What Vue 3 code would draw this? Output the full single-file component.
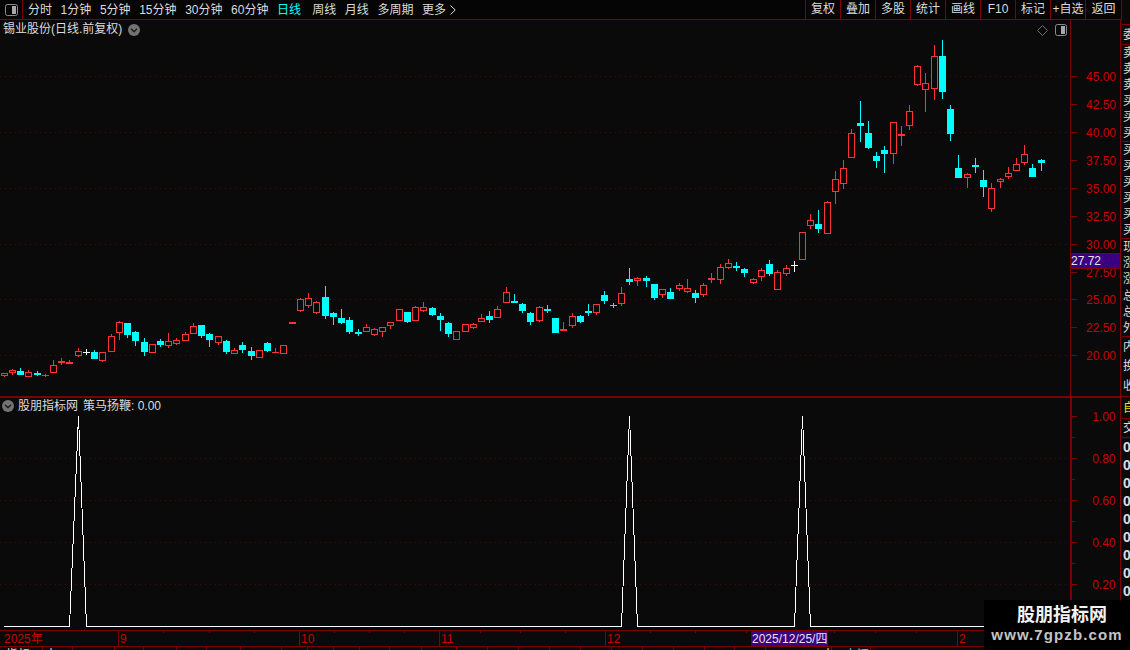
<script setup>
const Z7 = [
  [13,310,310,317,320,'r'],[37,297,301,308,315,'r'],[61,294,304,315,315,'c'],[85,300,307,320,320,'r'],
  [112,303,309,315,318,'c'],[136,312,315,317,320,'r'],[160,270,286,308,308,'r'],[184,264,273,279,285,'r'],
  [208,270,276,282,282,'r'],[235,234,244,257,260,'r'],[258,237,245,248,255,'w'],[283,240,246,267,267,'c'],
  [307,246,247,272,275,'r'],[334,192,199,245,245,'r'],[358,153,157,188,210,'r'],[382,159,159,195,204,'c'],
  [406,183,186,213,228,'c'],[433,204,216,246,258,'c'],[457,222,223,250,250,'r'],[481,207,213,225,231,'c'],
  [505,189,214,228,234,'r'],[529,204,211,221,225,'r'],[556,186,193,212,212,'r'],[580,159,169,191,191,'r'],
  [604,165,165,198,204,'c'],[628,189,192,210,231,'c'],[655,198,199,218,225,'r'],[679,210,213,246,252,'c'],
  [703,234,241,251,251,'r'],[727,216,225,240,249,'c'],[754,231,243,258,270,'c'],[778,240,241,263,263,'r'],
  [802,216,219,243,246,'c'],[826,234,246,249,249,'r'],[850,225,226,251,251,'r']
]
const Z8 = [
  [8,216,216,221,221,'r'],[31,144,148,182,186,'r'],[55,129,145,167,173,'r'],[79,153,157,188,191,'r'],
  [106,108,141,198,207,'c'],[130,186,189,201,225,'c'],[154,177,204,219,222,'c'],[178,201,210,246,252,'c'],
  [205,237,246,252,258,'c'],[229,222,232,247,247,'r'],[253,234,238,254,258,'r'],[277,232,232,245,261,'r'],
  [301,216,217,227,237,'r'],[328,177,178,212,212,'r'],[352,186,186,216,219,'c'],[376,168,172,212,212,'r'],
  [400,156,172,182,186,'r'],[427,171,174,195,198,'c'],[451,189,198,210,243,'c'],[475,216,219,252,261,'c'],
  [499,244,244,269,269,'r'],[526,222,223,245,245,'r'],[550,220,223,233,237,'r'],[574,192,205,215,215,'r'],
  [598,183,198,210,219,'c'],[622,168,178,203,203,'r'],[649,111,127,158,158,'r'],[673,132,153,159,159,'c'],
  [697,159,162,183,189,'c'],[721,186,189,216,225,'c'],[748,168,172,212,216,'r'],[772,165,177,183,189,'c'],
  [796,204,204,249,249,'c'],[820,216,237,243,243,'r'],[847,189,199,227,234,'r'],[871,195,198,216,219,'c']
]
const Z9 = [
  [7,249,258,288,294,'r'],[31,255,258,276,279,'c'],[55,222,243,249,258,'c'],[79,222,222,248,255,'r'],
  [103,183,195,213,222,'c'],[130,219,225,228,234,'c'],[154,171,190,221,228,'r'],[178,114,147,156,165,'c'],
  [202,141,144,152,168,'r'],[229,138,144,153,171,'c'],[253,162,162,204,210,'c'],[277,177,178,194,204,'r'],
  [301,174,186,207,207,'c'],[328,159,166,177,183,'r'],[352,147,175,186,189,'r'],[376,180,189,204,219,'c'],
  [400,159,166,194,201,'r'],[424,129,144,149,159,'r'],[451,102,112,149,162,'r'],[475,87,100,114,117,'r'],
  [499,96,108,114,123,'c'],[523,114,117,129,141,'c'],[550,144,148,159,162,'r'],[574,114,121,140,153,'r'],
  [598,90,102,132,138,'c'],[622,120,127,179,179,'r'],[649,105,115,131,138,'r'],[673,93,105,108,126,'w']
]
const Z10 = [
  [37,607,607,689,689,'r'],[61,552,571,589,596,'r'],[85,540,582,597,609,'c'],[112,514,517,611,611,'r'],
  [136,423,448,487,522,'r'],[160,390,415,461,477,'r'],[184,297,310,383,383,'r'],[211,213,279,288,336,'c'],
  [235,273,309,354,357,'c'],[259,366,378,393,414,'c'],[283,348,360,372,429,'c'],[310,277,277,371,402,'r'],
  [334,288,312,317,348,'r'],[358,225,244,287,300,'r'],[382,105,109,164,168,'r'],[406,129,160,179,246,'r'],
  [433,45,79,176,210,'r'],[457,30,78,186,207,'c'],[481,225,237,312,333,'c'],[505,375,414,444,444,'c'],
  [532,429,433,445,474,'r'],[556,384,405,411,429,'c'],[580,420,450,471,501,'c'],[604,459,475,536,546,'r'],
  [631,444,448,455,474,'r'],[655,411,430,442,447,'r'],[679,384,403,422,422,'r'],[703,345,373,398,405,'r'],
  [727,402,414,441,441,'c'],[754,387,390,399,423,'c']
]
const BG = '#0a0a0a'
const COL = { r: '#ff3333', c: '#00ffff', w: '#ffffff' }
const rects = []
function add(list, ox, oy) {
  for (const [zx, wt, bt, bb, wb, t] of list) {
    const x = Math.floor(zx / 3 + ox)
    const top = Math.round(bt / 3 + oy)
    const bot = Math.max(Math.round(bb / 3 + oy), top + 1)
    const wTop = Math.round(wt / 3 + oy)
    const wBot = Math.round(wb / 3 + oy)
    const fill = COL[t]
    if (wBot > wTop) rects.push({ x, y: wTop, w: 1, h: wBot - wTop, fill })
    rects.push({ x: x - 3, y: top, w: 7, h: bot - top, fill })
    if (t === 'r' && bot - top > 2) rects.push({ x: x - 2, y: top + 1, w: 5, h: bot - top - 2, fill: BG })
  }
}
add(Z7, 0, 270)
add(Z8, 290, 250)
add(Z9, 570, 230)
add(Z10, 790, 30)

const priceDots = [76.5, 132.5, 188.5, 244.5, 299.5, 355.5]
const priceLabels = [
  ['45.00', 76.5], ['42.50', 104.5], ['40.00', 132.5], ['37.50', 160.5], ['35.00', 188.5],
  ['32.50', 216.5], ['30.00', 244.5], ['27.50', 272.5], ['25.00', 299.5], ['22.50', 327.5], ['20.00', 355.5]
]
const lowDots = [458.5, 500.5, 542.5, 584.5]
const lowLabels = [['1.00', 416.5], ['0.80', 458.5], ['0.60', 500.5], ['0.40', 542.5], ['0.20', 584.5]]
const lowMinor = [437.5, 479.5, 521.5, 563.5, 605.5]

const leftTabs = [
  { t: '分时' }, { t: '1分钟' }, { t: '5分钟' }, { t: '15分钟' }, { t: '30分钟' }, { t: '60分钟' },
  { t: '日线', on: true }, { t: '周线' }, { t: '月线' }, { t: '多周期' }
]
const rightBtns = ['复权', '叠加', '多股', '统计', '画线', 'F10', '标记', '+自选', '返回']

const sideSections = [
  { h: 25, rows: [] }, { h: 20, rows: ['委'] },
  { h: 97, rows: ['卖', '卖', '卖', '买', '买', '买'] },
  { h: 97, rows: ['买', '买', '买', '买', '买', '买'] },
  { h: 98, rows: ['现', '涨', '涨', '总', '总', '外'] },
  { h: 60, rows: ['内', '换', '收'] },
  { h: 22, rows: ['自'], yellow: true }, { h: 19, rows: ['交'] }
]
const zeroRows = Array.from({ length: 11 }, () => '0.00')

const majorTicks = [118.5, 299.5, 439.5, 605.5, 957.5]
const minorTicks = [163.5, 209.5, 254.5, 334.5, 369.5, 404.5, 480.5, 520.5, 565.5, 650.5, 695.5, 746.5, 834.5, 875.5, 916.5]
const timeLabels = [['2025年', 4], ['9', 120], ['10', 301], ['11', 441], ['12', 607], ['2', 959]]

const tabWidths = [43, 30, 42, 29, 33, 30, 34, 41, 26, 26, 26, 30, 32, 35, 31, 31, 31, 31, 31, 31, 31, 31, 30, 31, 66, 39]
const tabText = { 0: { t: '指标', pad: 6 }, 1: { t: '十', pad: 2 }, 24: { t: '十', pad: 56 }, 25: { t: '上证', pad: 13, cyan: true } }
const bottomTabs = tabWidths.map((w, i) => ({ w, ...(tabText[i] || { t: '', pad: 0 }) }))
</script>

<template>
  <div class="screen">
    <div class="top">
      <div class="main">
        <header class="toolbar">
          <div class="layout-btn">
            <svg width="13" height="12" viewBox="0 0 13 12">
              <rect x="0.5" y="0.5" width="12" height="11" rx="2" fill="none" stroke="#8c8c8c" />
              <rect x="7" y="2" width="4" height="8" fill="#a8a8a8" />
            </svg>
          </div>
          <nav class="periods">
            <span v-for="p in leftTabs" :key="p.t" :class="['period', { on: p.on }]">{{ p.t }}</span>
            <span class="period more">更多
              <svg width="6" height="10" viewBox="0 0 6 10"><path d="M.5 .5 5.2 5 .5 9.5" fill="none" stroke="#dcdcdc" /></svg>
            </span>
          </nav>
          <div class="actions">
            <span v-for="b in rightBtns" :key="b" class="action">{{ b }}</span>
          </div>
        </header>

        <section class="pane upper">
          <div class="plot">
            <svg class="plot-svg" width="1070" height="376" viewBox="0 20 1070 376" shape-rendering="crispEdges">
              <line v-for="y in priceDots" :key="y" x1="0" x2="1068" :y1="y" :y2="y" class="dots" />
              <rect v-for="(r, i) in rects" :key="i" :x="r.x" :y="r.y" :width="r.w" :height="r.h" :fill="r.fill" />
            </svg>
            <div class="title">
              <span>锡业股份(日线.前复权)</span>
              <svg class="chev" width="12" height="12" viewBox="0 0 12 12">
                <circle cx="6" cy="6" r="6" fill="#737373" />
                <path d="M3 4.8 6 7.8 9 4.8" fill="none" stroke="#1c1c1c" stroke-width="1.4" />
              </svg>
            </div>
            <div class="tools">
              <svg width="11" height="11" viewBox="0 0 11 11">
                <path d="M5.5 .5 10.5 5.5 5.5 10.5 .5 5.5Z" fill="none" stroke="#6e6e6e" />
              </svg>
              <svg width="12" height="12" viewBox="0 0 12 12">
                <rect x="0.5" y="0.5" width="11" height="11" rx="2" fill="none" stroke="#8c8c8c" />
                <rect x="6" y="2" width="4" height="8" fill="#a8a8a8" />
              </svg>
            </div>
          </div>
          <div class="axis">
            <svg width="50" height="376" viewBox="1071 20 50 376" shape-rendering="crispEdges">
              <g v-for="l in priceLabels" :key="l[0]">
                <line x1="1071" x2="1077" :y1="l[1]" :y2="l[1]" class="tick" />
              </g>
            </svg>
            <svg class="axis-text" width="50" height="376" viewBox="1071 20 50 376">
              <text v-for="l in priceLabels" :key="l[0]" x="1116" :y="l[1] + 4.5" text-anchor="end" class="axis-label">{{ l[0] }}</text>
            </svg>
            <div class="last-price">27.72</div>
          </div>
        </section>

        <section class="pane lower">
          <div class="plot">
            <svg class="plot-svg" width="1069" height="232" viewBox="0 398 1069 232" shape-rendering="crispEdges">
              <line v-for="y in lowDots" :key="y" x1="0" x2="1068" :y1="y" :y2="y" class="dots" />
              <polyline class="spike" points="4,626.5 69.5,626.5 78.5,416 86.5,626.5 621.5,626.5 629.5,416 637.5,626.5 794.5,626.5 802.5,416 810.5,626.5 1069,626.5" />
            </svg>
            <div class="title sub">
              <svg class="chev first" width="12" height="12" viewBox="0 0 12 12">
                <circle cx="6" cy="6" r="6" fill="#737373" />
                <path d="M3 4.8 6 7.8 9 4.8" fill="none" stroke="#1c1c1c" stroke-width="1.4" />
              </svg>
              <span>股朋指标网</span>
              <span class="formula">策马扬鞭: 0.00</span>
            </div>
          </div>
          <div class="axis thick">
            <svg width="49" height="232" viewBox="1072 398 49 232" shape-rendering="crispEdges">
              <line v-for="l in lowLabels" :key="l[0]" x1="1072" x2="1077" :y1="l[1]" :y2="l[1]" class="tick" />
              <line v-for="y in lowMinor" :key="y" x1="1072" x2="1075" :y1="y" :y2="y" class="tick" />
            </svg>
            <svg class="axis-text" width="49" height="232" viewBox="1072 398 49 232">
              <text v-for="l in lowLabels" :key="l[0]" x="1115.5" :y="l[1] + 4.5" text-anchor="end" class="axis-label">{{ l[0] }}</text>
            </svg>
          </div>
        </section>

        <div class="timeline">
          <svg width="1121" height="15" viewBox="0 631 1121 15">
            <g shape-rendering="crispEdges">
              <line v-for="x in majorTicks" :key="x" :x1="x" :x2="x" y1="631" y2="646" class="tick" />
              <line v-for="x in minorTicks" :key="x" :x1="x" :x2="x" y1="631" y2="633" class="tick" />
              <rect x="751" y="631" width="77" height="15" fill="#3b0082" />
            </g>
            <text v-for="l in timeLabels" :key="l[0]" :x="l[1]" y="643" class="axis-label">{{ l[0] }}</text>
            <text x="752" y="643" class="date">2025/12/25/四</text>
          </svg>
        </div>
      </div>

      <aside class="side">
        <div
          v-for="(s, i) in sideSections"
          :key="i"
          :class="['side-section', { yellow: s.yellow }]"
          :style="{ height: s.h + 'px' }"
        >
          <span v-for="(r, j) in s.rows" :key="j">{{ r }}</span>
        </div>
        <div class="zeros">
          <span v-for="(z, i) in zeroRows" :key="i">{{ z }}</span>
        </div>
      </aside>
    </div>

    <footer class="tabs">
      <span
        v-for="(t, i) in bottomTabs"
        :key="i"
        :class="['tab', { cyan: t.cyan }]"
        :style="{ width: t.w + 'px', paddingLeft: t.pad + 'px' }"
      >{{ t.t }}</span>
    </footer>

    <div class="brand">
      <div class="brand-name">股朋指标网</div>
      <div class="brand-url">www.7gpzb.com</div>
    </div>
  </div>
</template>

<style>
html, body { margin: 0; background: #0a0a0a; overflow: hidden; }
</style>

<style scoped>
.screen {
  position: relative;
  width: 1130px;
  height: 650px;
  overflow: hidden;
  background: #0a0a0a;
  color: #dcdcdc;
  font: 12px/14px "Liberation Sans", "Noto Sans CJK SC", sans-serif;
}
.top { display: flex; height: 647px; }
.main { width: 1122px; flex: none; display: flex; flex-direction: column; }

.toolbar {
  height: 19px;
  display: flex;
  align-items: stretch;
  border-bottom: 1px solid #800000;
  background: #050505;
  flex: none;
}
.layout-btn {
  width: 23px;
  border-right: 1px solid #800000;
  display: flex;
  align-items: center;
  padding-left: 5px;
  box-sizing: border-box;
  flex: none;
}
.periods { display: flex; gap: 8.6px; padding-left: 5px; align-items: center; }
.period { white-space: nowrap; }
.period.on { color: #00ffff; }
.period.on + .period { margin-left: 2.6px; }
.more { display: flex; align-items: center; gap: 4px; }
.actions { margin-left: auto; display: flex; border-right: 1px solid #800000; }
.action {
  width: 35px;
  box-sizing: border-box;
  border-left: 1px solid #800000;
  text-align: center;
  line-height: 19px;
  white-space: nowrap;
}
.action:last-child { width: 36px; }

.pane { display: flex; position: relative; }
.upper { height: 376px; flex: none; border-bottom: 2px solid #800000; }
.lower { height: 232px; flex: none; }
.plot { position: relative; width: 1070px; flex: none; }
.lower .plot { width: 1069px; }
.plot-svg { display: block; }
.dots { stroke: #560808; stroke-width: 1; stroke-dasharray: 1 4; }
.spike { fill: none; stroke: #ffffff; stroke-width: 1; }

.title {
  position: absolute;
  left: 3px;
  top: 2px;
  display: flex;
  align-items: center;
  gap: 6px;
  white-space: nowrap;
}
.title.sub { left: 2px; top: 0; gap: 4px; height: 15px; }
.chev { flex: none; margin-top: 1px; }
.formula { margin-left: 1px; }
.tools {
  position: absolute;
  right: 3px;
  top: 4px;
  display: flex;
  gap: 7px;
  align-items: center;
}

.axis {
  position: relative;
  width: 51px;
  flex: none;
  box-sizing: border-box;
  border-left: 1px solid #800000;
  border-right: 1px solid #800000;
}
.axis.thick { border-left-width: 2px; margin-left: 1px; }
.axis svg { display: block; }
.axis-text { position: absolute; left: 0; top: 0; }
.tick { stroke: #800000; stroke-width: 1; }
.axis-label { fill: #c80000; font: 12px "Liberation Sans", "Noto Sans CJK SC", sans-serif; }
.date { fill: #e4e4e4; font: 12px "Liberation Sans", "Noto Sans CJK SC", sans-serif; }
.last-price {
  position: absolute;
  left: 0;
  right: 0;
  top: 233px;
  height: 14px;
  line-height: 14px;
  background: #3b0082;
  border-top: 1px solid #800000;
  border-bottom: 1px solid #800000;
  color: #e4e4e4;
}

.timeline {
  height: 15px;
  flex: none;
  border-top: 1px solid #800000;
  border-bottom: 1px solid #800000;
}
.timeline svg { display: block; }

.side { width: 8px; flex: none; overflow: hidden; }
.side-section {
  box-sizing: border-box;
  border-bottom: 1px solid #800000;
  display: flex;
  flex-direction: column;
  justify-content: space-around;
  white-space: nowrap;
  overflow: hidden;
  padding-left: 1px;
  font-size: 12px;
  line-height: 16px;
}
.side-section.yellow { color: #e6e600; }
.zeros {
  display: flex;
  flex-direction: column;
  padding-left: 1px;
  font-weight: 700;
  font-size: 14px;
  line-height: 18px;
  white-space: nowrap;
}

.tabs { height: 3px; display: flex; overflow: hidden; }
.tab {
  flex: none;
  box-sizing: border-box;
  border-right: 1px solid #800000;
  line-height: 17px;
  height: 17px;
  white-space: nowrap;
  overflow: hidden;
}
.tab.cyan { color: #00ffff; }

.brand {
  position: absolute;
  right: 0;
  bottom: 0;
  width: 146px;
  height: 50px;
  background: #000;
  text-align: center;
}
.brand-name {
  margin-top: 1px;
  padding-left: 10px;
  color: #f2f2f2;
  font: 700 18px/24px "Noto Sans CJK SC", sans-serif;
}
.brand-url {
  color: #c4c4c4;
  font: 700 15px/20px "Liberation Sans", sans-serif;
  letter-spacing: 1.1px;
}
</style>
